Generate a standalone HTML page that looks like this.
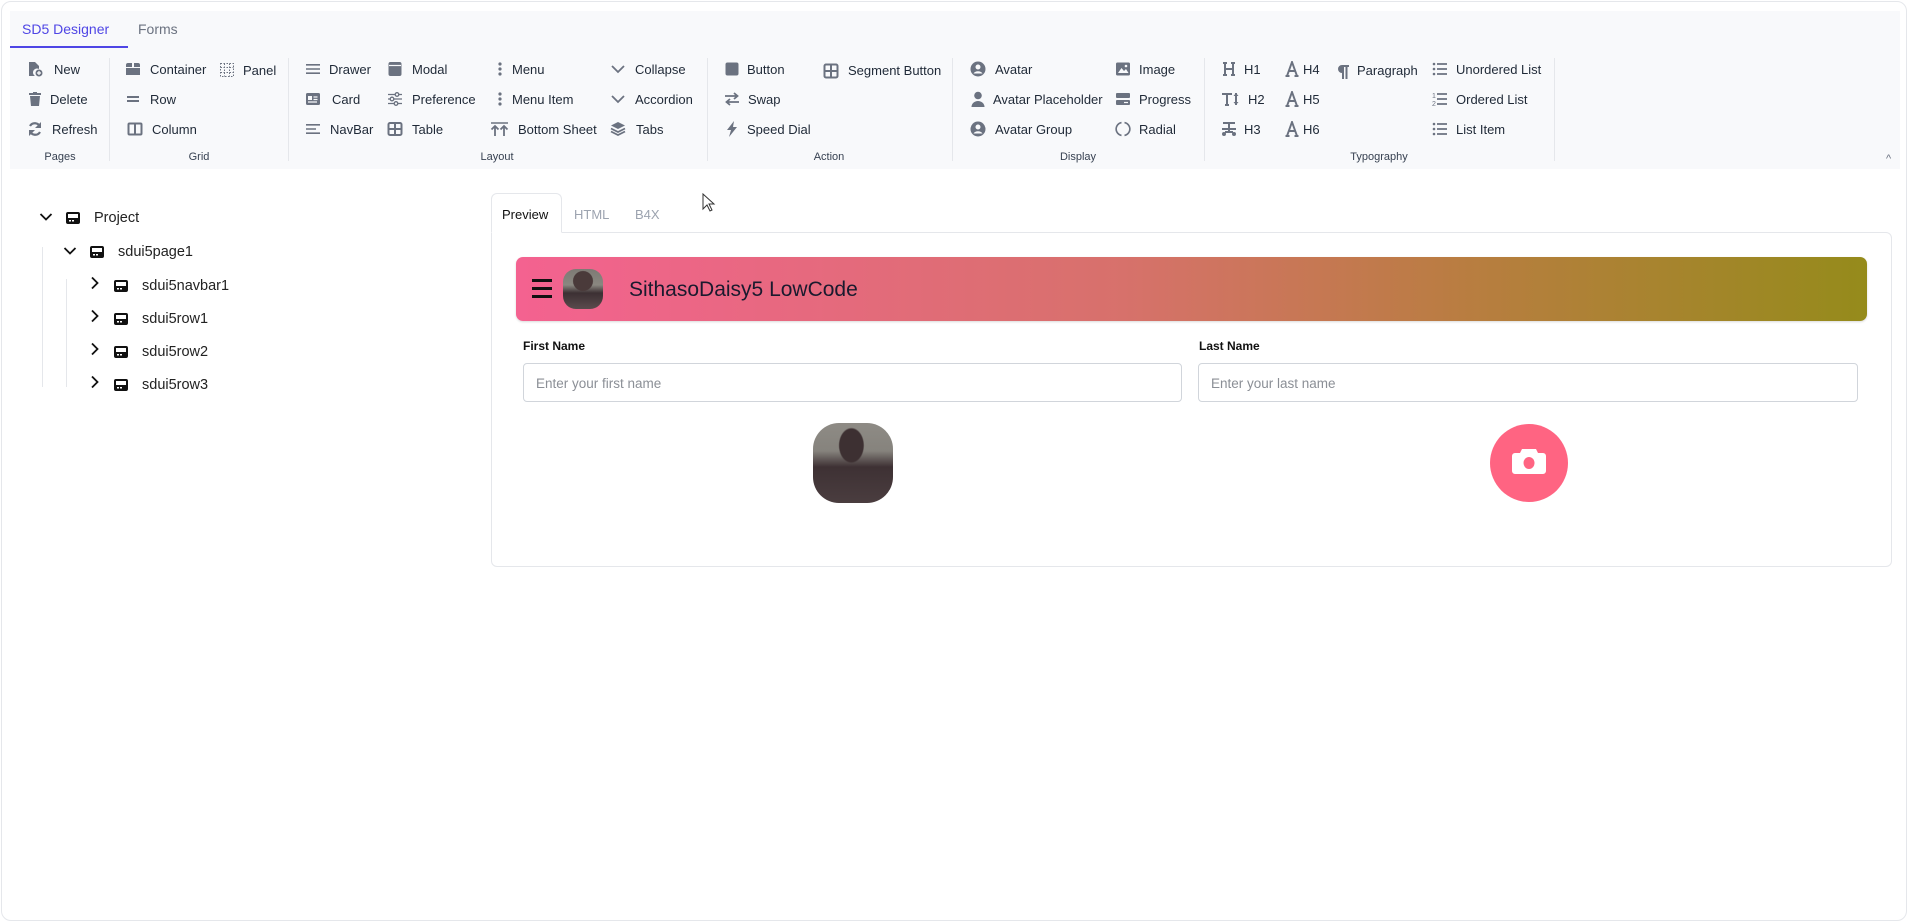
<!DOCTYPE html>
<html><head><meta charset="utf-8"><style>
*{box-sizing:border-box;margin:0;padding:0}
body{width:1910px;height:923px;position:relative;background:#fff;font-family:"Liberation Sans",Arial,sans-serif;overflow:hidden;color:#1f2937}
.frame{position:absolute;left:1px;top:1px;width:1906px;height:920px;border:1px solid #e5e7eb;border-radius:10px}
.rib{position:absolute;left:10px;top:11px;width:1890px;height:158px;background:#f8f9fb}
.it{position:absolute;height:18px;line-height:18px;font-size:13px;color:#1f2937;white-space:nowrap}
.ic{position:absolute;width:16px;height:16px}
.lab{position:absolute;top:151px;font-size:11px;color:#374151;transform:translateX(-50%)}
.sep{position:absolute;top:58px;width:1px;height:103px;background:#e5e7eb}
.tr{position:absolute;font-family:"Liberation Sans",sans-serif;font-size:14.5px;color:#222;line-height:18px}
.chev{position:absolute;width:14px;height:14px}
.tico{position:absolute;width:16px;height:14px}
</style></head><body>
<div class="frame"></div>
<div class="rib"></div>
<div style="position:absolute;left:22px;top:21px;font-size:14px;color:#4f46e5">SD5 Designer</div>
<div style="position:absolute;left:10px;top:46px;width:118px;height:2px;background:#4f46e5"></div>
<div style="position:absolute;left:138px;top:21px;font-size:14px;color:#6b7280">Forms</div>

<div class="sep" style="left:109px"></div><div class="sep" style="left:288px"></div><div class="sep" style="left:707px"></div><div class="sep" style="left:952px"></div><div class="sep" style="left:1204px"></div><div class="sep" style="left:1554px"></div>
<div class="lab" style="left:60px">Pages</div><div class="lab" style="left:199px">Grid</div><div class="lab" style="left:497px">Layout</div><div class="lab" style="left:829px">Action</div><div class="lab" style="left:1078px">Display</div><div class="lab" style="left:1379px">Typography</div>
<div style="position:absolute;left:1886px;top:153px;font-size:11px;color:#6b7280">^</div>

<!-- Pages -->
<svg class="ic" style="left:27px;top:61px" viewBox="0 0 16 16"><path d="M2 1h6l4 4v3a4 4 0 0 0-4 7H2z" fill="#6b7280"/><circle cx="12" cy="12" r="3.5" fill="#6b7280"/><path d="M12 10v4M10 12h4" stroke="#fff" stroke-width="1.2"/></svg>
<div class="it" style="left:54px;top:61px">New</div>
<svg class="ic" style="left:27px;top:91px" viewBox="0 0 16 16"><path d="M2 2h12v2H2zM6 1h4v1H6zM3 5h10l-1 10H4z" fill="#6b7280"/></svg>
<div class="it" style="left:50px;top:91px">Delete</div>
<svg class="ic" style="left:27px;top:121px" viewBox="0 0 16 16"><path d="M13 6A5.5 5.5 0 0 0 3 5M3 10a5.5 5.5 0 0 0 10 1" stroke="#6b7280" stroke-width="2.2" fill="none"/><path d="M14 1v6H8zM2 15V9h6z" fill="#6b7280"/></svg>
<div class="it" style="left:52px;top:121px">Refresh</div>
<!-- Grid -->
<svg class="ic" style="left:125px;top:61px" viewBox="0 0 16 16"><path d="M3 2h4v4H1V4a2 2 0 0 1 2-2zM9 2h4a2 2 0 0 1 2 2v2H9zM1 7h14v7H1z" fill="#6b7280"/></svg>
<div class="it" style="left:150px;top:61px">Container</div>
<svg class="ic" style="left:219px;top:62px" viewBox="0 0 16 16"><rect x="1.5" y="1.5" width="13" height="13" fill="none" stroke="#6b7280" stroke-dasharray="1.5 1.5"/><path d="M5.5 1.5v13M10.5 1.5v13M1.5 5.5h13M1.5 10.5h13" stroke="#6b7280" stroke-dasharray="1.5 1.5"/></svg>
<div class="it" style="left:243px;top:62px">Panel</div>
<svg class="ic" style="left:125px;top:91px" viewBox="0 0 16 16"><path d="M2 5h12v2H2zM2 9h12v2H2z" fill="#6b7280"/></svg>
<div class="it" style="left:150px;top:91px">Row</div>
<svg class="ic" style="left:127px;top:121px" viewBox="0 0 16 16"><rect x="1.5" y="2.5" width="13" height="11" rx="1" fill="none" stroke="#6b7280" stroke-width="2"/><path d="M8 3v10" stroke="#6b7280" stroke-width="2"/></svg>
<div class="it" style="left:152px;top:121px">Column</div>
<!-- Layout -->
<svg class="ic" style="left:305px;top:61px" viewBox="0 0 16 16"><path d="M1 3h14v1.6H1zM1 7.2h14v1.6H1zM1 11.4h14V13H1z" fill="#6b7280"/></svg>
<div class="it" style="left:329px;top:61px">Drawer</div>
<svg class="ic" style="left:305px;top:91px" viewBox="0 0 16 16"><rect x="1" y="2" width="14" height="12" rx="1.5" fill="#6b7280"/><rect x="3" y="5" width="4" height="4" fill="#f8f9fb"/><path d="M8.5 6h4M8.5 8.5h4M3 11h9" stroke="#f8f9fb" stroke-width="1.2"/></svg>
<div class="it" style="left:332px;top:91px">Card</div>
<svg class="ic" style="left:305px;top:121px" viewBox="0 0 16 16"><path d="M1 3h14v1.6H1zM1 7.2h10v1.6H1zM1 11.4h14V13H1z" fill="#6b7280"/></svg>
<div class="it" style="left:330px;top:121px">NavBar</div>
<svg class="ic" style="left:387px;top:61px" viewBox="0 0 16 16"><rect x="1.5" y="1" width="13" height="14" rx="2" fill="#6b7280"/><path d="M2 4.5h12" stroke="#f8f9fb" stroke-width="1.2"/></svg>
<div class="it" style="left:412px;top:61px">Modal</div>
<svg class="ic" style="left:387px;top:91px" viewBox="0 0 16 16"><path d="M1 3.5h14M1 8h14M1 12.5h14" stroke="#6b7280" stroke-width="1.3"/><circle cx="10" cy="3.5" r="1.8" fill="#f8f9fb" stroke="#6b7280" stroke-width="1.3"/><circle cx="5" cy="8" r="1.8" fill="#f8f9fb" stroke="#6b7280" stroke-width="1.3"/><circle cx="9" cy="12.5" r="1.8" fill="#f8f9fb" stroke="#6b7280" stroke-width="1.3"/></svg>
<div class="it" style="left:412px;top:91px">Preference</div>
<svg class="ic" style="left:387px;top:121px" viewBox="0 0 16 16"><rect x="1.5" y="2" width="13" height="12" rx="1.5" fill="none" stroke="#6b7280" stroke-width="2"/><path d="M1.5 8h13M8 2v12" stroke="#6b7280" stroke-width="2"/></svg>
<div class="it" style="left:412px;top:121px">Table</div>
<svg class="ic" style="left:492px;top:61px" viewBox="0 0 16 16"><circle cx="8" cy="3" r="1.6" fill="#6b7280"/><circle cx="8" cy="8" r="1.6" fill="#6b7280"/><circle cx="8" cy="13" r="1.6" fill="#6b7280"/></svg>
<div class="it" style="left:512px;top:61px">Menu</div>
<svg class="ic" style="left:492px;top:91px" viewBox="0 0 16 16"><circle cx="8" cy="3" r="1.6" fill="#6b7280"/><circle cx="8" cy="8" r="1.6" fill="#6b7280"/><circle cx="8" cy="13" r="1.6" fill="#6b7280"/></svg>
<div class="it" style="left:512px;top:91px">Menu Item</div>
<svg class="ic" style="left:490px;top:121px;width:19px" viewBox="0 0 19 16"><path d="M1 2h17" stroke="#6b7280" stroke-width="1.5"/><path d="M5 15V5M1.5 8.5 5 5l3.5 3.5M14 15V5M10.5 8.5 14 5l3.5 3.5" stroke="#6b7280" stroke-width="1.8" fill="none"/></svg>
<div class="it" style="left:518px;top:121px">Bottom Sheet</div>
<svg class="ic" style="left:610px;top:61px" viewBox="0 0 16 16"><path d="M2 5l6 6 6-6" stroke="#6b7280" stroke-width="1.8" fill="none"/></svg>
<div class="it" style="left:635px;top:61px">Collapse</div>
<svg class="ic" style="left:610px;top:91px" viewBox="0 0 16 16"><path d="M2 5l6 6 6-6" stroke="#6b7280" stroke-width="1.8" fill="none"/></svg>
<div class="it" style="left:635px;top:91px">Accordion</div>
<svg class="ic" style="left:610px;top:121px" viewBox="0 0 16 16"><path d="M8 1l7 3.5L8 8 1 4.5z" fill="#6b7280"/><path d="M1 7.5 8 11l7-3.5M1 10.5 8 14l7-3.5" stroke="#6b7280" stroke-width="1.8" fill="none"/></svg>
<div class="it" style="left:636px;top:121px">Tabs</div>
<!-- Action -->
<svg class="ic" style="left:724px;top:61px" viewBox="0 0 16 16"><rect x="1.5" y="1.5" width="13" height="13" rx="2" fill="#6b7280"/></svg>
<div class="it" style="left:747px;top:61px">Button</div>
<svg class="ic" style="left:724px;top:91px" viewBox="0 0 16 16"><path d="M1 5h12M10 2l3.5 3L10 8M15 11H3M6 8l-3.5 3L6 14" stroke="#6b7280" stroke-width="1.8" fill="none"/></svg>
<div class="it" style="left:748px;top:91px">Swap</div>
<svg class="ic" style="left:724px;top:121px" viewBox="0 0 16 16"><path d="M10 0 3 9h4l-2 7 8-10H9z" fill="#6b7280"/></svg>
<div class="it" style="left:747px;top:121px">Speed Dial</div>
<svg class="ic" style="left:823px;top:63px" viewBox="0 0 16 16"><rect x="1.5" y="1.5" width="13" height="13" rx="1.5" fill="none" stroke="#6b7280" stroke-width="2"/><path d="M1.5 8h13M8 1.5v13" stroke="#6b7280" stroke-width="2"/></svg>
<div class="it" style="left:848px;top:62px">Segment Button</div>
<!-- Display -->
<svg class="ic" style="left:970px;top:61px" viewBox="0 0 16 16"><circle cx="8" cy="8" r="7.5" fill="#6b7280"/><circle cx="8" cy="6" r="2.5" fill="#f8f9fb"/><path d="M3.5 12.5a5 4 0 0 1 9 0" fill="#f8f9fb"/></svg>
<div class="it" style="left:995px;top:61px">Avatar</div>
<svg class="ic" style="left:970px;top:91px" viewBox="0 0 16 16"><circle cx="8" cy="4.5" r="3.8" fill="#6b7280"/><path d="M1.5 16a6.5 6 0 0 1 13 0z" fill="#6b7280"/></svg>
<div class="it" style="left:993px;top:91px">Avatar Placeholder</div>
<svg class="ic" style="left:970px;top:121px" viewBox="0 0 16 16"><circle cx="8" cy="8" r="7.5" fill="#6b7280"/><circle cx="8" cy="6" r="2.5" fill="#f8f9fb"/><path d="M3.5 12.5a5 4 0 0 1 9 0" fill="#f8f9fb"/></svg>
<div class="it" style="left:995px;top:121px">Avatar Group</div>
<svg class="ic" style="left:1115px;top:61px" viewBox="0 0 16 16"><rect x="1" y="1.5" width="14" height="13" rx="1.5" fill="#6b7280"/><path d="M3 12l3.5-5 2.5 3 2-2 2.5 4z" fill="#f8f9fb"/><circle cx="11" cy="5" r="1.3" fill="#f8f9fb"/></svg>
<div class="it" style="left:1139px;top:61px">Image</div>
<svg class="ic" style="left:1115px;top:91px" viewBox="0 0 16 16"><rect x="1" y="2" width="14" height="5" rx="1" fill="#6b7280"/><rect x="1" y="9" width="14" height="5" rx="1" fill="#6b7280"/><path d="M9 11.5h4" stroke="#f8f9fb" stroke-width="1.2"/></svg>
<div class="it" style="left:1139px;top:91px">Progress</div>
<svg class="ic" style="left:1115px;top:121px" viewBox="0 0 16 16"><path d="M6.5 1.6a6.5 6.5 0 0 0 0 12.8M9.5 1.6a6.5 6.5 0 0 1 0 12.8" stroke="#6b7280" stroke-width="1.6" fill="none"/></svg>
<div class="it" style="left:1139px;top:121px">Radial</div>
<!-- Typography -->
<svg class="ic" style="left:1221px;top:61px" viewBox="0 0 16 16"><path d="M4 2v12M12 2v12M4 8h8M2 2h4M10 2h4M2 14h4M10 14h4" stroke="#6b7280" stroke-width="2" fill="none"/></svg>
<div class="it" style="left:1244px;top:61px">H1</div>
<svg class="ic" style="left:1221px;top:91px;width:20px" viewBox="0 0 20 16"><path d="M1 3h10M6 3v11M4 14h4M15 2v12" stroke="#6b7280" stroke-width="2" fill="none"/><path d="M12.5 5 15 2l2.5 3zM12.5 11l2.5 3 2.5-3z" fill="#6b7280"/></svg>
<div class="it" style="left:1248px;top:91px">H2</div>
<svg class="ic" style="left:1221px;top:121px" viewBox="0 0 16 16"><path d="M2 2h12M8 2v9M1 8h14M4 11h8" stroke="#6b7280" stroke-width="2" fill="none"/><circle cx="3" cy="13" r="2" fill="#6b7280"/><circle cx="13" cy="13" r="2" fill="#6b7280"/></svg>
<div class="it" style="left:1244px;top:121px">H3</div>
<svg class="ic" style="left:1284px;top:61px" viewBox="0 0 16 16"><path d="M3 15 8 1l5 14M5 10h6M1.5 15h4M10.5 15h4" stroke="#6b7280" stroke-width="1.9" fill="none"/></svg>
<div class="it" style="left:1303px;top:61px">H4</div>
<svg class="ic" style="left:1284px;top:91px" viewBox="0 0 16 16"><path d="M3 15 8 1l5 14M5 10h6M1.5 15h4M10.5 15h4" stroke="#6b7280" stroke-width="1.9" fill="none"/></svg>
<div class="it" style="left:1303px;top:91px">H5</div>
<svg class="ic" style="left:1284px;top:121px" viewBox="0 0 16 16"><path d="M3 15 8 1l5 14M5 10h6M1.5 15h4M10.5 15h4" stroke="#6b7280" stroke-width="1.9" fill="none"/></svg>
<div class="it" style="left:1303px;top:121px">H6</div>
<svg class="ic" style="left:1335px;top:63px" viewBox="0 0 16 16"><path d="M7 2h7v2h-1.5v12h-2V4H9v12H7v-6a4 4 0 0 1 0-8z" fill="#6b7280"/></svg>
<div class="it" style="left:1357px;top:62px">Paragraph</div>
<svg class="ic" style="left:1432px;top:61px" viewBox="0 0 16 16"><circle cx="2" cy="3" r="1.3" fill="#6b7280"/><circle cx="2" cy="8" r="1.3" fill="#6b7280"/><circle cx="2" cy="13" r="1.3" fill="#6b7280"/><path d="M5 3h10M5 8h10M5 13h10" stroke="#6b7280" stroke-width="1.7"/></svg>
<div class="it" style="left:1456px;top:61px">Unordered List</div>
<svg class="ic" style="left:1432px;top:91px" viewBox="0 0 16 16"><text x="0" y="7" font-size="7" fill="#6b7280" font-family="Liberation Sans">1</text><text x="0" y="15" font-size="7" fill="#6b7280" font-family="Liberation Sans">2</text><path d="M5 3h10M5 8h10M5 13h10" stroke="#6b7280" stroke-width="1.7"/></svg>
<div class="it" style="left:1456px;top:91px">Ordered List</div>
<svg class="ic" style="left:1432px;top:121px" viewBox="0 0 16 16"><circle cx="2" cy="3" r="1.3" fill="#6b7280"/><circle cx="2" cy="8" r="1.3" fill="#6b7280"/><circle cx="2" cy="13" r="1.3" fill="#6b7280"/><path d="M5 3h10M5 8h10M5 13h10" stroke="#6b7280" stroke-width="1.7"/></svg>
<div class="it" style="left:1456px;top:121px">List Item</div>

<!-- Tree -->
<div style="position:absolute;left:42px;top:247px;width:1px;height:140px;background:#e5e7eb"></div>
<div style="position:absolute;left:66px;top:279px;width:1px;height:108px;background:#e5e7eb"></div>
<svg class="chev" style="left:39px;top:210px" viewBox="0 0 14 14"><path d="M1.5 4 7 9.5 12.5 4" stroke="#111" stroke-width="1.8" fill="none"/></svg>
<svg class="tico" style="left:65px;top:211px" viewBox="0 0 16 14"><rect x="1" y="1" width="14" height="12" rx="2" fill="#111"/><rect x="3" y="3" width="10" height="4" fill="#fff"/><rect x="4" y="9" width="2" height="1.5" fill="#fff"/><rect x="7" y="9" width="2" height="1.5" fill="#fff"/></svg>
<div class="tr" style="left:94px;top:209px">Project</div>
<svg class="chev" style="left:63px;top:244px" viewBox="0 0 14 14"><path d="M1.5 4 7 9.5 12.5 4" stroke="#111" stroke-width="1.8" fill="none"/></svg>
<svg class="tico" style="left:89px;top:245px" viewBox="0 0 16 14"><rect x="1" y="1" width="14" height="12" rx="2" fill="#111"/><rect x="3" y="3" width="10" height="4" fill="#fff"/><rect x="4" y="9" width="2" height="1.5" fill="#fff"/><rect x="7" y="9" width="2" height="1.5" fill="#fff"/></svg>
<div class="tr" style="left:118px;top:243px">sdui5page1</div>

<svg class="chev" style="left:88px;top:276px" viewBox="0 0 14 14"><path d="M4 1.5 9.5 7 4 12.5" stroke="#111" stroke-width="1.8" fill="none"/></svg>
<svg class="tico" style="left:113px;top:279px" viewBox="0 0 16 14"><rect x="1" y="1" width="14" height="12" rx="2" fill="#111"/><rect x="3" y="3" width="10" height="4" fill="#fff"/><rect x="4" y="9" width="2" height="1.5" fill="#fff"/><rect x="7" y="9" width="2" height="1.5" fill="#fff"/></svg>
<div class="tr" style="left:142px;top:277px">sdui5navbar1</div>
<svg class="chev" style="left:88px;top:309px" viewBox="0 0 14 14"><path d="M4 1.5 9.5 7 4 12.5" stroke="#111" stroke-width="1.8" fill="none"/></svg>
<svg class="tico" style="left:113px;top:312px" viewBox="0 0 16 14"><rect x="1" y="1" width="14" height="12" rx="2" fill="#111"/><rect x="3" y="3" width="10" height="4" fill="#fff"/><rect x="4" y="9" width="2" height="1.5" fill="#fff"/><rect x="7" y="9" width="2" height="1.5" fill="#fff"/></svg>
<div class="tr" style="left:142px;top:310px">sdui5row1</div>
<svg class="chev" style="left:88px;top:342px" viewBox="0 0 14 14"><path d="M4 1.5 9.5 7 4 12.5" stroke="#111" stroke-width="1.8" fill="none"/></svg>
<svg class="tico" style="left:113px;top:345px" viewBox="0 0 16 14"><rect x="1" y="1" width="14" height="12" rx="2" fill="#111"/><rect x="3" y="3" width="10" height="4" fill="#fff"/><rect x="4" y="9" width="2" height="1.5" fill="#fff"/><rect x="7" y="9" width="2" height="1.5" fill="#fff"/></svg>
<div class="tr" style="left:142px;top:343px">sdui5row2</div>
<svg class="chev" style="left:88px;top:375px" viewBox="0 0 14 14"><path d="M4 1.5 9.5 7 4 12.5" stroke="#111" stroke-width="1.8" fill="none"/></svg>
<svg class="tico" style="left:113px;top:378px" viewBox="0 0 16 14"><rect x="1" y="1" width="14" height="12" rx="2" fill="#111"/><rect x="3" y="3" width="10" height="4" fill="#fff"/><rect x="4" y="9" width="2" height="1.5" fill="#fff"/><rect x="7" y="9" width="2" height="1.5" fill="#fff"/></svg>
<div class="tr" style="left:142px;top:376px">sdui5row3</div>

<!-- Preview panel -->
<div style="position:absolute;left:491px;top:232px;width:1401px;height:335px;border:1px solid #e5e7eb;border-radius:0 6px 6px 6px"></div>
<div style="position:absolute;left:491px;top:193px;width:71px;height:40px;border:1px solid #e5e7eb;border-bottom:1px solid #fff;border-radius:6px 6px 0 0;background:#fff"></div>
<div style="position:absolute;left:502px;top:207px;font-size:13px;color:#111;font-family:'Liberation Sans',sans-serif">Preview</div>
<div style="position:absolute;left:574px;top:207px;font-size:13px;color:#9ca3af;font-family:'Liberation Sans',sans-serif">HTML</div>
<div style="position:absolute;left:635px;top:207px;font-size:13px;color:#9ca3af;font-family:'Liberation Sans',sans-serif">B4X</div>
<svg style="position:absolute;left:702px;top:193px" width="14" height="20" viewBox="0 0 14 20"><path d="M1 1v15l4-4 3 6 2-1-3-6h5z" fill="#fff" stroke="#333" stroke-width="1"/></svg>

<div style="position:absolute;left:516px;top:257px;width:1351px;height:64px;border-radius:7px;background:linear-gradient(90deg,#f46290 0%,#d7716b 45%,#b97d41 70%,#958b1b 100%);box-shadow:0 1px 2px rgba(0,0,0,.15)"></div>
<div style="position:absolute;left:532px;top:279px;width:20px;height:3px;background:#111"></div>
<div style="position:absolute;left:532px;top:287px;width:20px;height:3px;background:#111"></div>
<div style="position:absolute;left:532px;top:295px;width:20px;height:3px;background:#111"></div>
<div style="position:absolute;left:563px;top:269px;width:40px;height:40px;border-radius:13px;background:radial-gradient(circle at 50% 30%,#4a3a3a 0 28%,transparent 30%),linear-gradient(180deg,#7d7a74 0%,#8a8780 40%,#3c3033 60%,#5a4b4d 100%)"></div>
<div style="position:absolute;left:629px;top:278px;font-size:21px;color:#1a1a2e;font-family:'Liberation Sans',sans-serif">SithasoDaisy5 LowCode</div>

<div style="position:absolute;left:523px;top:339px;font-size:12px;font-weight:bold;color:#111">First Name</div>
<div style="position:absolute;left:523px;top:363px;width:659px;height:39px;border:1px solid #d1d5db;border-radius:4px"></div>
<div style="position:absolute;left:536px;top:376px;font-size:13.5px;color:#8b8f96;font-family:'Liberation Sans',sans-serif">Enter your first name</div>
<div style="position:absolute;left:1199px;top:339px;font-size:12px;font-weight:bold;color:#111">Last Name</div>
<div style="position:absolute;left:1198px;top:363px;width:660px;height:39px;border:1px solid #d1d5db;border-radius:4px"></div>
<div style="position:absolute;left:1211px;top:376px;font-size:13.5px;color:#8b8f96;font-family:'Liberation Sans',sans-serif">Enter your last name</div>

<div style="position:absolute;left:813px;top:423px;width:80px;height:80px;border-radius:26px;background:radial-gradient(ellipse at 48% 28%,#3d3032 0 20%,transparent 22%),linear-gradient(180deg,#8e8b85 0%,#86837d 35%,#3e3134 55%,#4a3d3f 100%)"></div>
<div style="position:absolute;left:1490px;top:424px;width:78px;height:78px;border-radius:50%;background:#ff6482"></div>
<svg style="position:absolute;left:1508px;top:443px" width="42" height="40" viewBox="0 0 42 40"><path d="M14 6h14l2 4h5a3 3 0 0 1 3 3v15a3 3 0 0 1-3 3H7a3 3 0 0 1-3-3V13a3 3 0 0 1 3-3h5z" fill="#fff"/><ellipse cx="21" cy="20" rx="5.5" ry="6" fill="#ff6482"/></svg>
</body></html>
